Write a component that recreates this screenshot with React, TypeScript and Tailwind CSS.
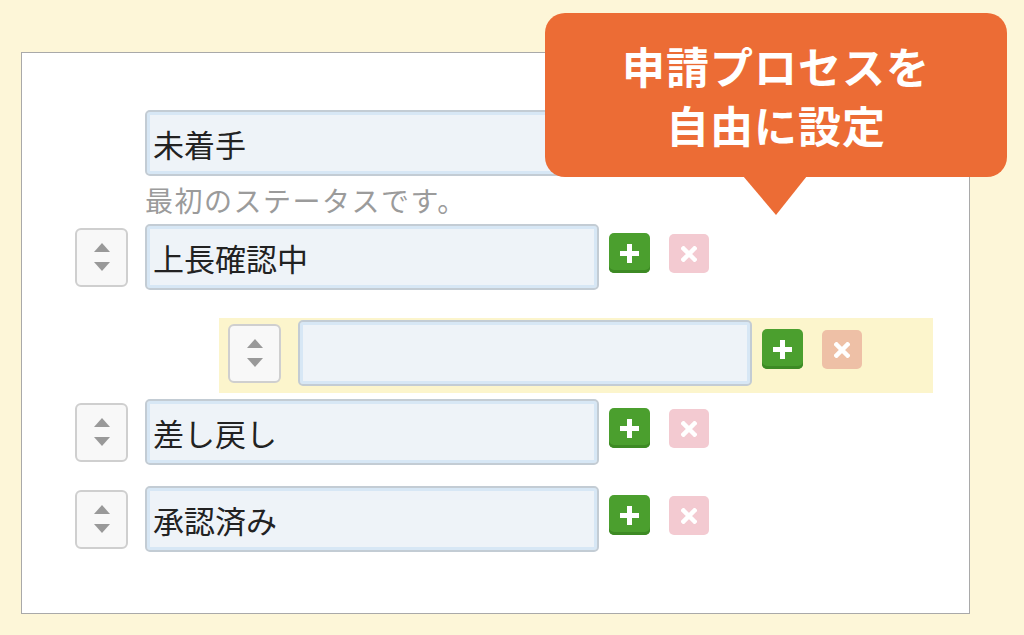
import React from "react";

const Spinner = () => (
  <div className="w-[53px] h-[59px] mr-[17px] shrink-0 rounded-[6px] border-2 border-[#cfcfcf] bg-[#f8f8f8] flex items-center justify-center">
    <svg width="16" height="28" viewBox="0 0 16 28">
      <polygon points="8,0 16,9 0,9" fill="#999" />
      <polygon points="0,19 16,19 8,28" fill="#999" />
    </svg>
  </div>
);

const TextBox = ({ value }: { value?: string }) => (
  <div className="w-[454px] h-[66px] shrink-0 rounded-[5px] border-2 border-[#c3ccd4] bg-[#eef3f8] shadow-[inset_0_0_0_3px_#d7e7f5] flex items-center pl-[6px] text-[31px] text-[#222] leading-none">
    {value}
  </div>
);

const AddButton = () => (
  <div className="ml-[10px] self-start mt-[9px] w-[41px] h-[40px] rounded-[5px] bg-[#4b9f2e] shadow-[inset_0_-3px_0_#3d8a24] flex items-center justify-center">
    <svg width="19" height="19" viewBox="0 0 19 19">
      <rect x="7" y="0" width="5" height="19" fill="#fff" />
      <rect x="0" y="7" width="19" height="5" fill="#fff" />
    </svg>
  </div>
);

const RemoveButton = ({ tint }: { tint: string }) => (
  <div className={`ml-[19px] self-start mt-[10px] w-[40px] h-[39px] rounded-[5px] flex items-center justify-center ${tint}`}>
    <svg width="16" height="16" viewBox="0 0 16 16">
      <path d="M2.5 2.5 L13.5 13.5 M13.5 2.5 L2.5 13.5" stroke="#fff" strokeWidth="4.5" strokeLinecap="square" />
    </svg>
  </div>
);

const StatusRow = ({ value, tint = "bg-[#f3cad1]" }: { value?: string; tint?: string }) => (
  <div className="flex items-center h-[66px]">
    <Spinner />
    <TextBox value={value} />
    <AddButton />
    <RemoveButton tint={tint} />
  </div>
);

export default function App() {
  return (
    <div className="relative w-[1024px] h-[635px] overflow-hidden bg-[#fdf6d8] pt-[52px] pl-[21px] font-['Noto_Sans_CJK_JP',sans-serif]">
      <div className="w-[949px] h-[562px] bg-white border border-[#a9a9a9] pt-[57px] pl-[53px]">
        <div className="flex items-center h-[66px]">
          <div className="w-[53px] mr-[17px] shrink-0" />
          <TextBox value="未着手" />
        </div>
        <p className="ml-[70px] h-[48px] leading-[48px] text-[28px] tracking-[1.5px] text-[#9b9b9b]">最初のステータスです。</p>
        <StatusRow value="上長確認中" />
        <div className="mt-[28px] ml-[144px] w-[714px] h-[75px] bg-[#fcf5cc] pl-[9px] pt-[2px]">
          <StatusRow tint="bg-[#eec0a6]" />
        </div>
        <div className="mt-[6px]">
          <StatusRow value="差し戻し" />
        </div>
        <div className="mt-[21px]">
          <StatusRow value="承認済み" />
        </div>
      </div>

      <div className="absolute left-[545px] top-[13px] w-[462px] h-[164px] rounded-[20px] bg-[#ec6c35] flex flex-col items-center justify-center text-white font-bold text-[43px] leading-[59px] tracking-[1px]">
        <span>申請プロセスを</span>
        <span>自由に設定</span>
      </div>
      <svg className="absolute left-[743px] top-[176px]" width="64" height="39" viewBox="0 0 64 39">
        <polygon points="0,0 64,0 33,39" fill="#ec6c35" />
      </svg>
    </div>
  );
}
